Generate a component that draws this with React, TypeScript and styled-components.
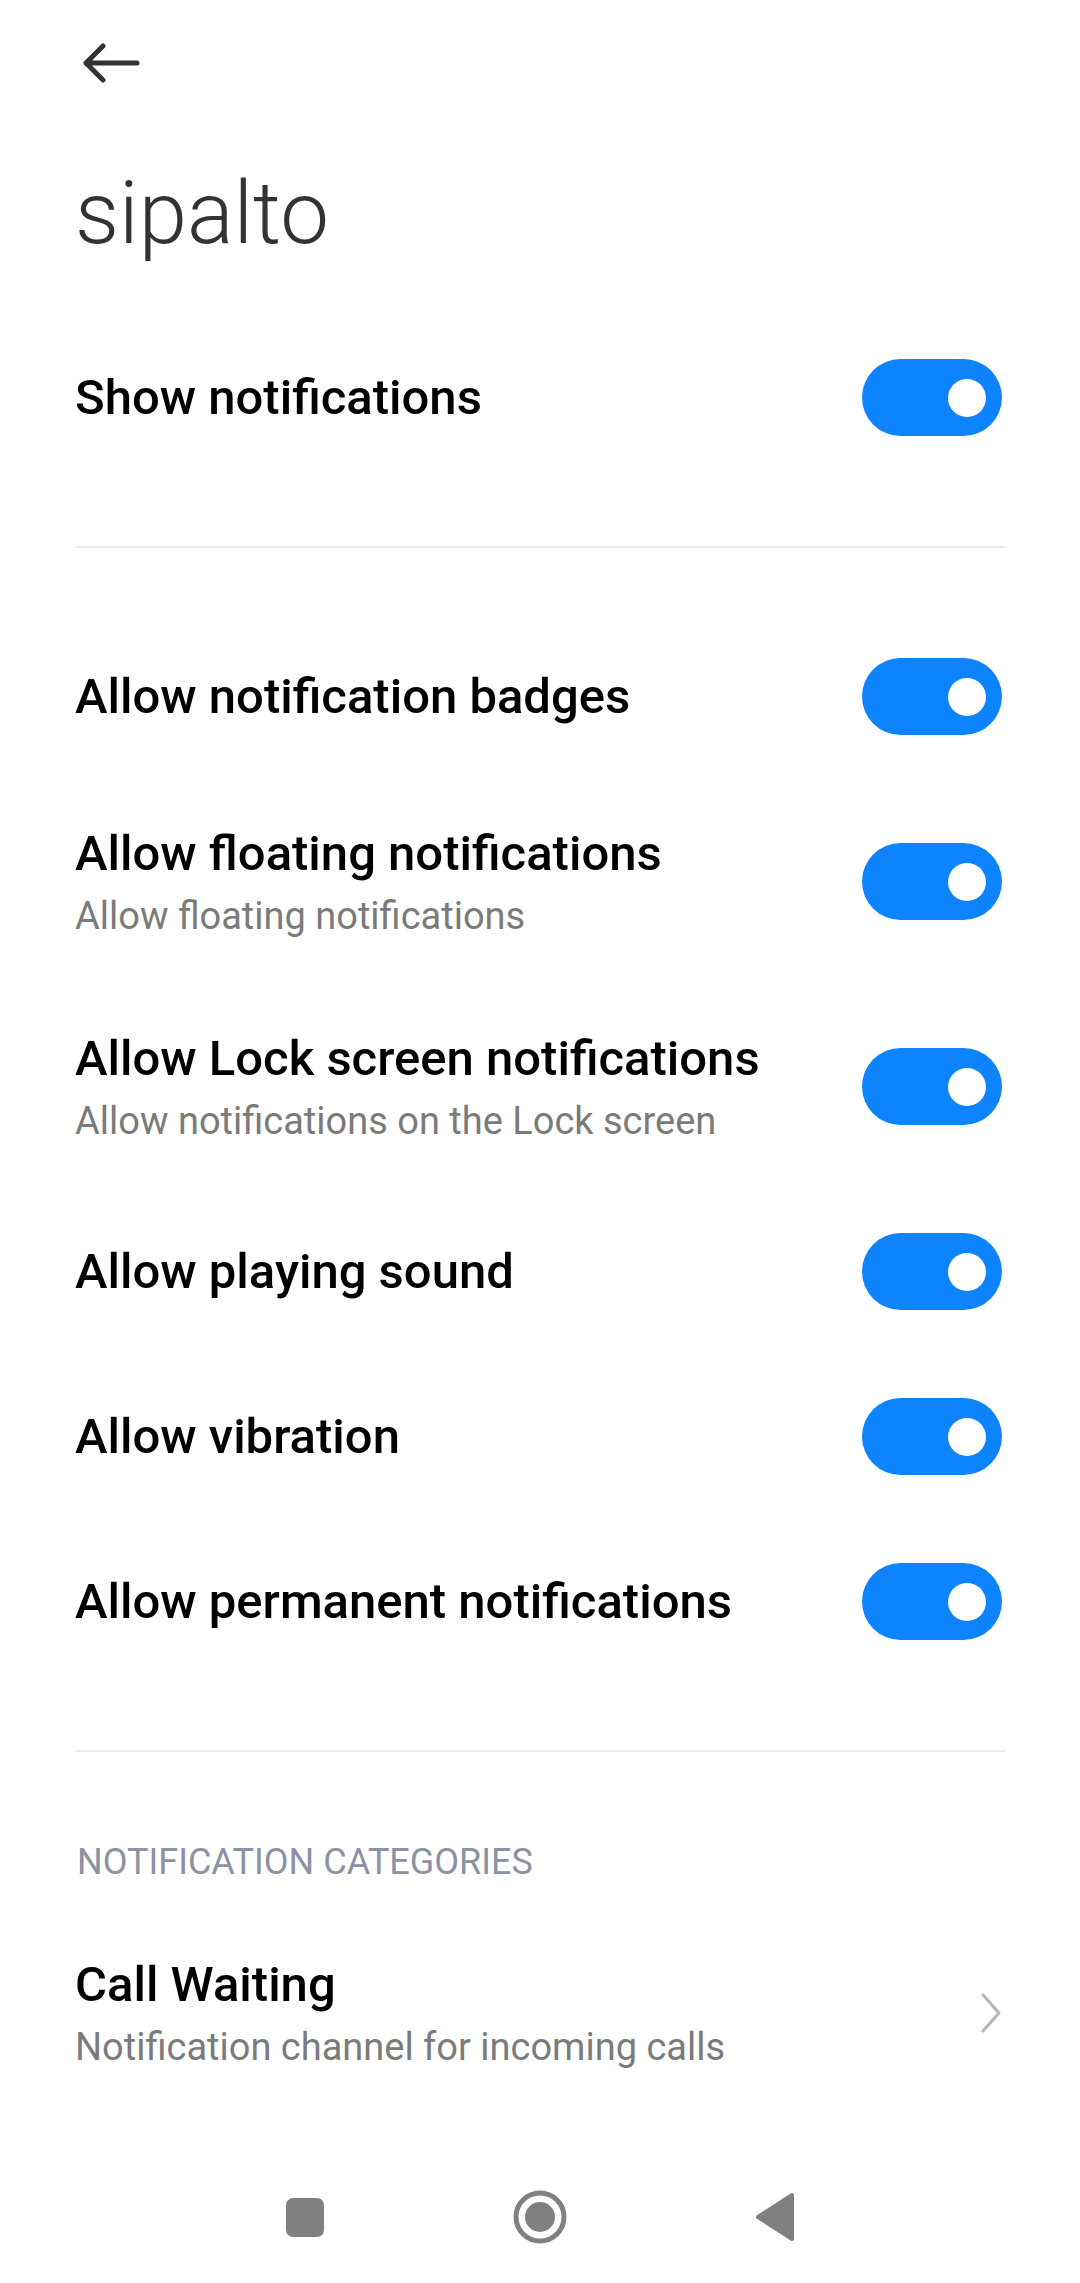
import React from "react";
import styled, { createGlobalStyle } from "styled-components";

const GlobalStyle = createGlobalStyle`
  html, body {
    margin: 0;
    padding: 0;
    background: #fff;
  }
  body {
    font-family: Roboto, "Noto Sans", "Liberation Sans", sans-serif;
    -webkit-font-smoothing: antialiased;
  }
  * {
    box-sizing: border-box;
  }
`;

const Screen = styled.div`
  display: flex;
  flex-direction: column;
  width: 1080px;
  min-height: 100vh;
  background: #fff;
`;

const Content = styled.main`
  padding: 0 78px 0 75px;
`;

const TopBar = styled.header`
  display: flex;
  align-items: center;
  height: 126px;
  padding-left: 7px;
`;

const BackButton = styled.button`
  display: flex;
  padding: 0;
  border: none;
  background: none;
  cursor: pointer;
`;

const AppTitle = styled.h1`
  margin: 35px 0 50px;
  font-size: 87px;
  font-weight: 300;
  line-height: 104px;
  color: #333;
`;

const Row = styled.div`
  display: flex;
  align-items: center;
  justify-content: space-between;
  min-height: 165px;
  padding: 44px 0;
`;

const RowText = styled.div`
  display: flex;
  flex-direction: column;
`;

const RowTitle = styled.span`
  font-size: 49px;
  font-weight: 500;
  line-height: 62px;
  color: #000;
`;

const RowSub = styled.span`
  margin-top: 7px;
  font-size: 38px;
  font-weight: 400;
  line-height: 48px;
  color: #7b7b7b;
`;

const Toggle = styled.button<{ $on: boolean }>`
  position: relative;
  flex-shrink: 0;
  width: 140px;
  height: 77px;
  padding: 0;
  border: none;
  border-radius: 39px;
  background: ${(p) => (p.$on ? "#0d84fe" : "#d9d9d9")};
  cursor: pointer;

  &::after {
    content: "";
    position: absolute;
    top: 19.5px;
    ${(p) => (p.$on ? "right: 16px;" : "left: 16px;")}
    width: 38px;
    height: 38px;
    border-radius: 50%;
    background: #fff;
  }
`;

const Divider = styled.hr`
  height: 2px;
  margin: 66px -3px 66px 1px;
  border: none;
  background: #ebebeb;
`;

const SectionLabel = styled.div`
  padding: 20px 0 24px 2px;
  font-size: 36px;
  line-height: 48px;
  color: #8c92a4;
`;

const Chevron = styled.svg`
  flex-shrink: 0;
  width: 22px;
  height: 40px;
`;

const NavBar = styled.nav`
  display: flex;
  align-items: center;
  justify-content: center;
  height: 132px;
  margin-top: auto;
`;

const NavSlot = styled.div`
  display: flex;
  align-items: center;
  justify-content: center;
  width: 235px;
`;

const RecentsKey = styled.div`
  width: 38px;
  height: 39px;
  border-radius: 7px;
  background: #808080;
`;

interface Setting {
  title: string;
  sub?: string;
}

const switches: Setting[] = [
  { title: "Allow notification badges" },
  { title: "Allow floating notifications", sub: "Allow floating notifications" },
  {
    title: "Allow Lock screen notifications",
    sub: "Allow notifications on the Lock screen",
  },
  { title: "Allow playing sound" },
  { title: "Allow vibration" },
  { title: "Allow permanent notifications" },
];

const SwitchRow = ({ title, sub }: Setting) => (
  <Row>
    <RowText>
      <RowTitle>{title}</RowTitle>
      {sub && <RowSub>{sub}</RowSub>}
    </RowText>
    <Toggle $on aria-label={title} />
  </Row>
);

const App = () => {
  return (
    <Screen>
      <GlobalStyle />
      <Content>
        <TopBar>
          <BackButton aria-label="Back">
            <svg width="58" height="40" viewBox="0 0 58 40">
              <path
                d="M4 20 H55 M21 3 L4 20 L21 37"
                fill="none"
                stroke="#333"
                strokeWidth="5"
                strokeLinecap="round"
                strokeLinejoin="round"
              />
            </svg>
          </BackButton>
        </TopBar>

        <AppTitle>sipalto</AppTitle>

        <SwitchRow title="Show notifications" />

        <Divider />

        {switches.map((s) => (
          <SwitchRow key={s.title} {...s} />
        ))}

        <Divider />

        <SectionLabel>NOTIFICATION CATEGORIES</SectionLabel>

        <Row>
          <RowText>
            <RowTitle>Call Waiting</RowTitle>
            <RowSub>Notification channel for incoming calls</RowSub>
          </RowText>
          <Chevron viewBox="0 0 22 40">
            <path
              d="M3 2 L19 20 L3 38"
              fill="none"
              stroke="#b5b5b5"
              strokeWidth="3"
              strokeLinecap="round"
              strokeLinejoin="round"
            />
          </Chevron>
        </Row>
      </Content>

      <NavBar>
        <NavSlot>
          <RecentsKey />
        </NavSlot>
        <NavSlot>
          <svg width="56" height="56" viewBox="0 0 56 56">
            <circle cx="28" cy="28" r="24" fill="none" stroke="#808080" strokeWidth="5" />
            <circle cx="28" cy="28" r="15" fill="#808080" />
          </svg>
        </NavSlot>
        <NavSlot>
          <svg width="42" height="50" viewBox="0 0 42 50">
            <path
              d="M38 3 L38 47 L4 25 Z"
              fill="#808080"
              stroke="#808080"
              strokeWidth="4"
              strokeLinejoin="round"
            />
          </svg>
        </NavSlot>
      </NavBar>
    </Screen>
  );
};

export default App;
